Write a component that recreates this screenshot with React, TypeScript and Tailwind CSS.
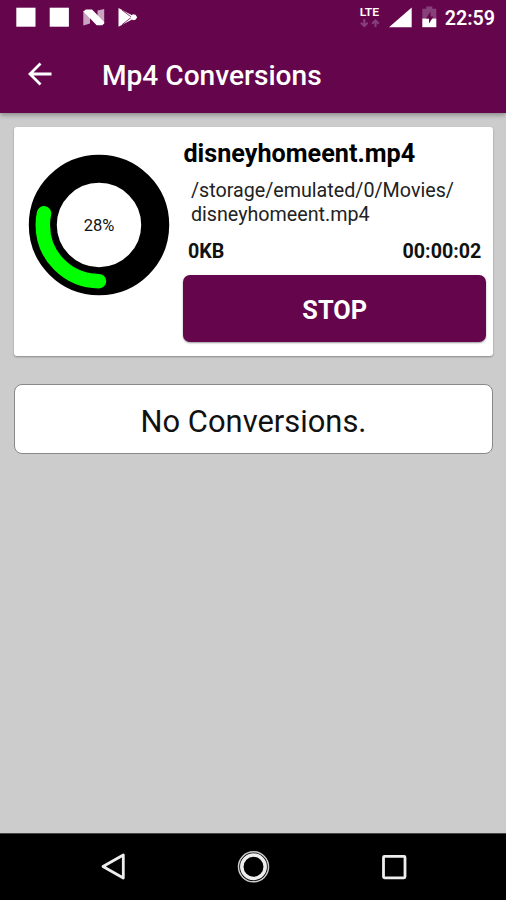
import React from 'react';

interface Conversion {
  name: string;
  path: string[];
  size: string;
  elapsed: string;
  progress: number;
}

const current: Conversion = {
  name: 'disneyhomeent.mp4',
  path: ['/storage/emulated/0/Movies/', 'disneyhomeent.mp4'],
  size: '0KB',
  elapsed: '00:00:02',
  progress: 28,
};

const StatusBar = () => (
  <div className="flex h-[34px] items-center justify-between pl-4 pr-[11px] text-white">
    <svg width="124" height="20" viewBox="16 7 124 20" fill="#fff">
      <rect x="16.3" y="7.7" width="19.2" height="19" />
      <rect x="49.7" y="7.7" width="19.2" height="19" />
      {/* Android N */}
      <path d="M83.300 11l6.700 2v10.500l-6.700 2z" fill="#c9a3c0" />
      <path d="M97.500 10.500l6.700-1.500v14l-6.700-2z" fill="#c9a3c0" />
      <path d="M83.300 11.500l2.500-2h6.200l12.200 12.500v1.500l-2 1.800h-5.500z" />
      {/* Play store */}
      <path d="M118.500 8l14 7.500v3.800l-14 7.500z" />
      <path d="M122 10l9.500 7.200-9.500 7.500" stroke="#65064d" strokeWidth=".8" fill="none" />
      <path d="M130.300 17.200l2.500-3 2.700.5 1.700 2.500-1.700 2.500-2.700.5z" />
    </svg>
    <div className="flex items-center">
      <svg width="80" height="22" viewBox="358 6 80 22" fill="#fff">
        <text x="359.700" y="16.200" fontFamily="Roboto" fontSize="11.500" fontWeight="600" textLength="19.500" lengthAdjust="spacingAndGlyphs">LTE</text>
        <g stroke="#87407a" strokeWidth="2" fill="none">
          <path d="M364.300 19v7M361 22.800l3.300 3.300 3.300-3.300" />
          <path d="M375.500 27v-6M372.200 23.800l3.300-3.300 3.300 3.300" />
        </g>
        <path d="M411.700 7.500v19.700H389z" />
        <path d="M422.300 8.700h4V6.500h6v2.200h4v9.800h-14z" fill="#87407a" />
        <path d="M422.300 18.500h14v8.700h-14z" />
        <path d="M430.500 11.500l-4.500 7h3v5l4.500-7h-3z" fill="#65064d" />
      </svg>
      <span className="ml-[7px] pt-[4px] text-[19.700px] font-semibold leading-6">22:59</span>
    </div>
  </div>
);

const AppBar = () => (
  <div className="flex h-[79px] items-center pl-7 text-white">
    <svg width="26" height="26" viewBox="0 0 26 26" fill="none" stroke="#fff" strokeWidth="2.800">
      <path d="M23.500 13H3M12.500 2.500L2 13l10.500 10.500" />
    </svg>
    <h1 className="ml-12 pt-[5px] text-[28.100px] font-medium leading-8">Mp4 Conversions</h1>
  </div>
);

const ProgressRing = ({ value }: { value: number }) => (
  <svg width="142" height="142" viewBox="-71 -71 142 142">
    <circle r="56.200" fill="none" stroke="#000" strokeWidth="28" />
    <circle
      r="56.200"
      fill="none"
      stroke="#0f0"
      strokeWidth="14.500"
      strokeLinecap="round"
      pathLength="360"
      strokeDasharray="102 360"
      transform="rotate(90)"
    />
    <text y="6" textAnchor="middle" fontFamily="Roboto" fontSize="16.500" fill="#111">{value}%</text>
  </svg>
);

const ConversionCard = ({ item }: { item: Conversion }) => (
  <section className="ml-[14px] mr-[13px] mt-[14px] flex h-[229px] rounded-[3px] bg-white shadow-[0_1px_2px_#888]">
    <div className="ml-[14px] mt-[27px] w-[142px]">
      <ProgressRing value={item.progress} />
    </div>
    <div className="ml-[13.400px] w-[302.500px] pt-[12px]">
      <h2 className="text-[25.200px] font-bold leading-[30px]">{item.name}</h2>
      <div className="mt-[10px] pl-[7.500px] text-[19.700px] leading-[23.500px] text-[#222]">
        {item.path.map((line) => (
          <p key={line}>{line}</p>
        ))}
      </div>
      <div className="mt-[14px] flex justify-between pl-[4.500px] pr-[4.500px] text-[19.700px] font-bold leading-6 text-[#111]">
        <span>{item.size}</span>
        <span>{item.elapsed}</span>
      </div>
      <button className="mt-[11px] h-[67px] w-full rounded-[7px] bg-[#65064d] pt-[4px] text-[25.300px] font-bold text-white shadow-[0_1px_2px_#999]">
        STOP
      </button>
    </div>
  </section>
);

const NavBar = () => (
  <nav className="h-[67px] border-t border-[#444] bg-black">
    <svg width="506" height="66" viewBox="0 834 506 66" fill="none" stroke="#eee" strokeWidth="2.800">
      <path d="M123.300 855v23L103 866.500z" strokeLinejoin="round" />
      <circle cx="253.500" cy="866.800" r="15" strokeWidth="1.500" stroke="#ccc" />
      <circle cx="253.500" cy="866.800" r="11.700" strokeWidth="3.500" />
      <rect x="383.500" y="856.300" width="21.500" height="21.500" rx="1" />
    </svg>
  </nav>
);

export default function App() {
  return (
    <div className="flex h-[900px] w-[506px] flex-col overflow-hidden bg-[#ccc] font-[Roboto,sans-serif] text-black">
      <header className="h-[113px] bg-[#65064d] shadow-[0_2px_5px_#888]">
        <StatusBar />
        <AppBar />
      </header>
      <main className="flex-1">
        <ConversionCard item={current} />
        <div className="ml-[14px] mr-[13px] mt-[28px] flex h-[70px] items-center justify-center rounded-[8px] border border-[#888] bg-white pt-[6px] text-[30.900px] text-[#111]">
          No Conversions.
        </div>
      </main>
      <NavBar />
    </div>
  );
}
